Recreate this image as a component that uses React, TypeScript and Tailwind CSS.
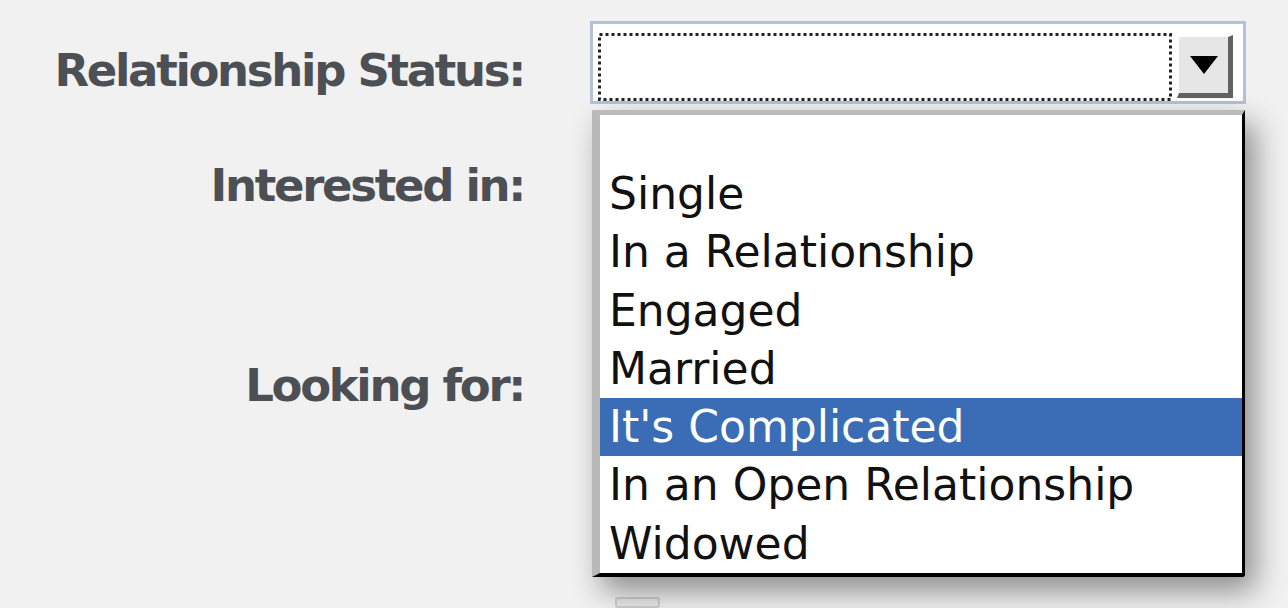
import React from 'react';

const statuses = [
  'Single',
  'In a Relationship',
  'Engaged',
  'Married',
  "It's Complicated",
  'In an Open Relationship',
  'Widowed',
];

const selected = "It's Complicated";

const labelClass =
  'h-[58px] leading-[58px] text-[45px] font-bold tracking-[-2.3px] text-[#4c4f54] whitespace-nowrap';

const App: React.FC = () => {
  return (
    <div className="w-[1288px] h-[608px] overflow-hidden bg-[#f1f1f1] flex font-['DejaVu_Sans',sans-serif]">
      {/* labels */}
      <div className="w-[524px] flex flex-col items-end pt-[42px]">
        <div className={labelClass}>Relationship Status:</div>
        <div className={`${labelClass} mt-[57px]`}>Interested in:</div>
        <div className={`${labelClass} mt-[142px]`}>Looking for:</div>
      </div>

      {/* controls */}
      <div className="ml-[66px] relative flex flex-col">
        <div className="mt-[21px] w-[656px] h-[89px] border-[3px] border-[#b4c1d6] bg-white flex items-start pl-[5px] pt-[9px]">
          {/* focus ring */}
          <svg width="574" height="68" className="block">
            <rect
              x="1.5"
              y="1.5"
              width="571"
              height="65"
              fill="none"
              stroke="#222"
              strokeWidth="3"
              strokeDasharray="3 3"
            />
          </svg>
          <div className="ml-[5px] mt-[2px] w-[56px] h-[63px] bg-[#e6e6e6] border-t-2 border-l-2 border-white border-r-[5px] border-b-[5px] border-r-[#626262] border-b-[#626262] flex items-center justify-center">
            <svg width="28" height="18" viewBox="0 0 28 18">
              <polygon points="0,0 28,0 14,18" fill="#000" />
            </svg>
          </div>
        </div>

        {/* checkbox peeking below */}
        <div className="ml-[25px] mt-[493px] w-[45px] h-[20px] rounded-[3px] border-2 border-[#cfcfcf] bg-[#e9e9e9]" />

        {/* open dropdown list */}
        <div className="absolute left-[2px] top-[110px] w-[653px] h-[467px] bg-white border-l-[8px] border-l-[#b9b9b9] border-t-[5px] border-t-[#bcbcbc] border-r-[3px] border-r-black border-b-[4px] border-b-black rounded-br-[3px] shadow-[10px_14px_30px_rgba(0,0,0,0.42)] flex flex-col">
          <div className="h-[50px]" />
          {statuses.map((s) => (
            <div
              key={s}
              className={
                s === selected
                  ? 'h-[58.3px] leading-[58.3px] pl-[9px] text-[44px] bg-[#3a6db5] text-white whitespace-nowrap'
                  : 'h-[58.3px] leading-[58.3px] pl-[9px] text-[44px] text-[#111] whitespace-nowrap'
              }
            >
              {s}
            </div>
          ))}
        </div>
      </div>
    </div>
  );
};

export default App;
